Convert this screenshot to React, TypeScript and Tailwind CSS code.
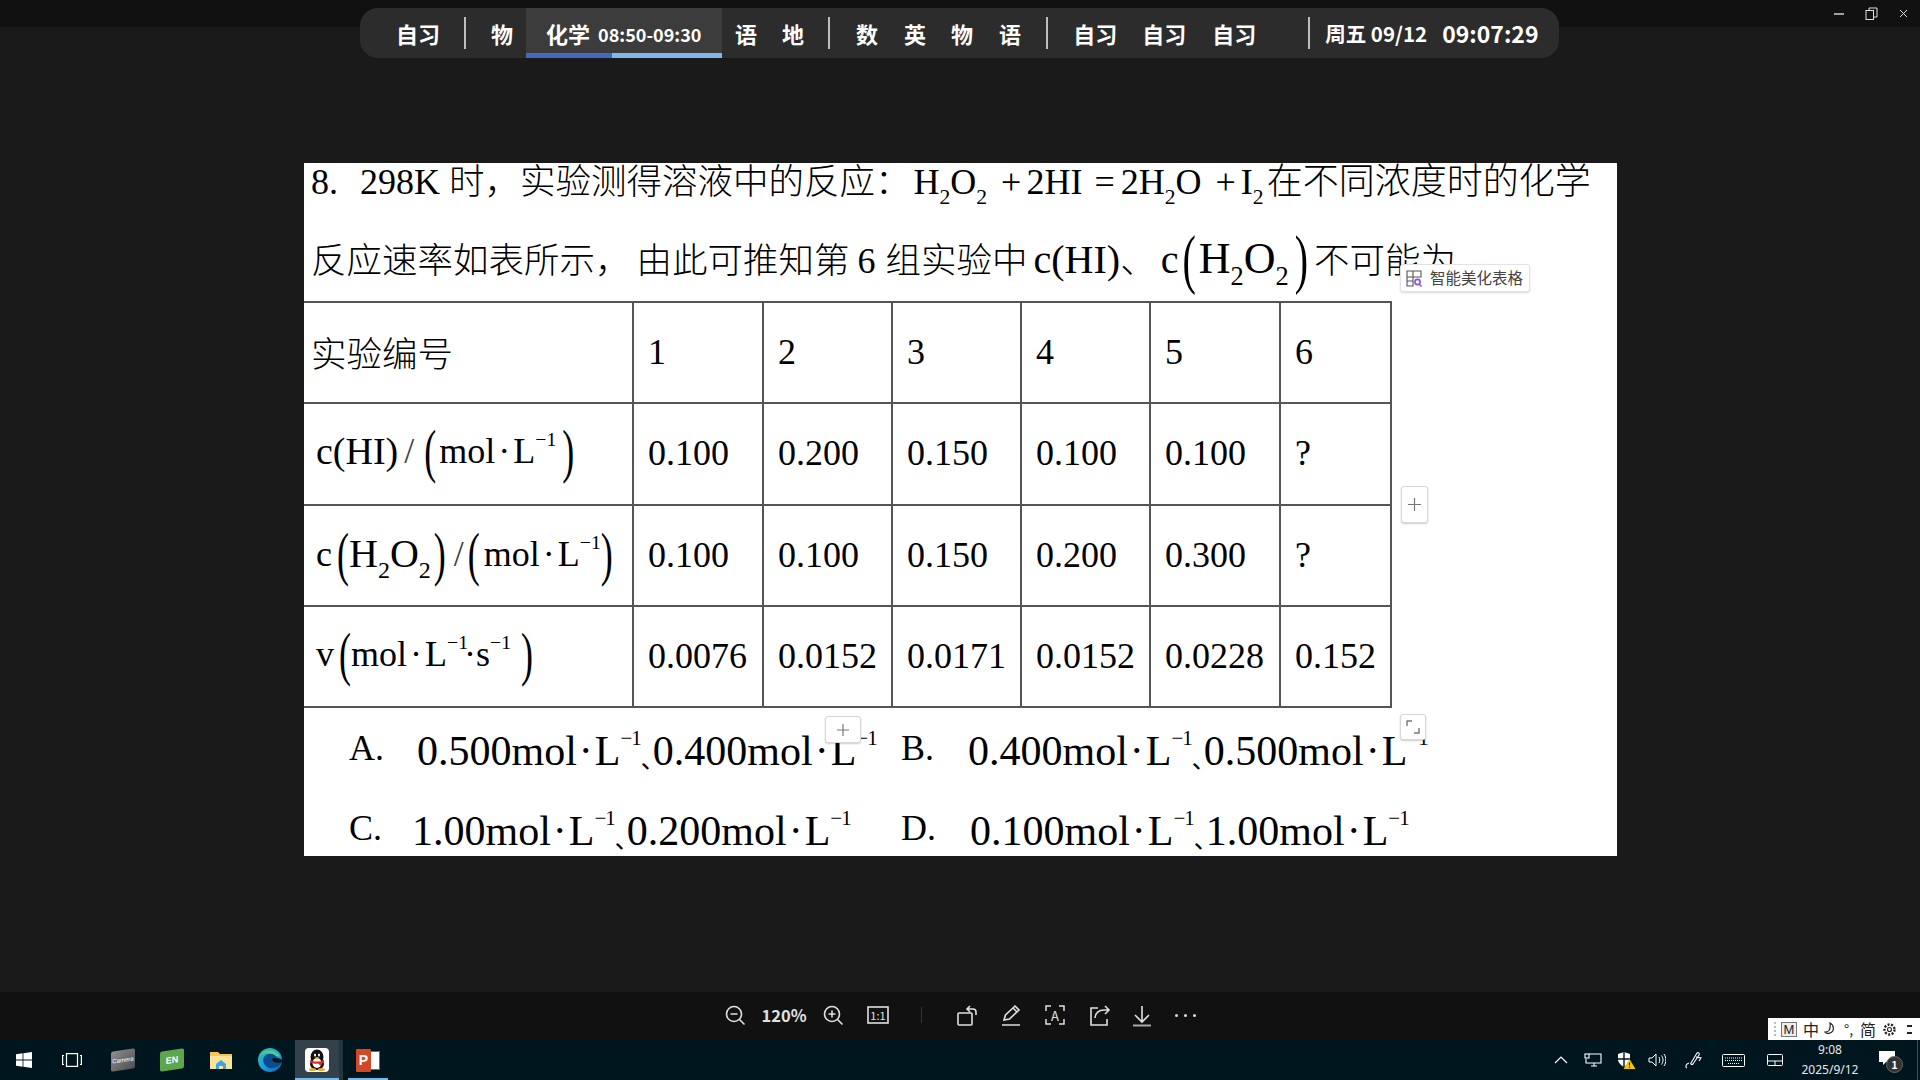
import React from "react";

const GRID = "grid grid-cols-[328px_130px_129px_129px_129px_130px_113px] border-t-2 border-[#555] ";

const Sup = ({ c = "−1" }: { c?: string }) => (
  <span className="text-[0.55em] align-[0.85em] leading-none">{c}</span>
);
const SupS = () => (
  <span className="text-[0.5em] tracking-[-1px] align-[0.95em] leading-none">−1</span>
);
const Sub = ({ c = "2" }: { c?: string }) => (
  <span className="text-[0.6em] align-[-0.45em] leading-none">{c}</span>
);
const Z = ({ children, className = "" }: { children: React.ReactNode; className?: string }) => (
  <span className={"text-[35.5px] font-light font-['Noto_Sans_CJK_SC','Liberation_Serif',sans-serif] " + className}>{children}</span>
);
const BigL = ({ className = "" }: { className?: string }) => (
  <span className={"inline-block scale-y-[1.65] font-light " + className}>(</span>
);
const BigR = ({ className = "" }: { className?: string }) => (
  <span className={"inline-block scale-y-[1.65] font-light " + className}>)</span>
);
const Val = ({ v }: { v: string }) => (
  <span className="whitespace-pre">
    {v}mol<span className="mx-[2px]">·</span>L
    <SupS />
  </span>
);
const Dun = () => (
  <span className="inline-block w-[12px] text-[24px] font-['Noto_Sans_CJK_SC',sans-serif] leading-none translate-y-[3px]">、</span>
);

const Cell = ({ children, last = false }: { children: React.ReactNode; last?: boolean }) => (
  <div className={"flex items-center pl-[14px] pb-[2px] border-l-2 border-[#555] text-[36px] " + (last ? "border-r-2" : "")}>{children}</div>
);

const Head = ({ children, className = "" }: { children: React.ReactNode; className?: string }) => (
  <div className={"flex items-center pl-[12px] text-[36px] whitespace-pre " + className}>{children}</div>
);

const rows = [
  ["0.100", "0.200", "0.150", "0.100", "0.100", "?"],
  ["0.100", "0.100", "0.150", "0.200", "0.300", "?"],
  ["0.0076", "0.0152", "0.0171", "0.0152", "0.0228", "0.152"],
];

const Ico = ({ children, w = 24, h = 24, cls = "" }: { children: React.ReactNode; w?: number; h?: number; cls?: string }) => (
  <svg width={w} height={h} viewBox={`0 0 ${w} ${h}`} fill="none" stroke="#e0e0e0" strokeWidth="1.6" className={cls}>
    {children}
  </svg>
);

const TI = ({ children }: { children: React.ReactNode }) => (
  <div className="w-[44px] flex items-center justify-center">{children}</div>
);

const Chip = ({ children, className }: { children: React.ReactNode; className: string }) => (
  <div className={"absolute bg-white border border-[#d8d8d8] rounded-[3px] shadow-[0_1px_2px_rgba(0,0,0,0.2)] flex items-center justify-center " + className}>
    {children}
  </div>
);

export default function App() {
  return (
    <div className="relative w-[1920px] h-[1080px] overflow-hidden bg-[#1a1a1a] flex flex-col font-['Noto_Sans_CJK_SC',sans-serif] text-white">
      {/* title strip */}
      <div className="h-[27px] bg-[#111111] flex items-start justify-end shrink-0">
        <div className="flex items-center h-[27px] pr-[12px] gap-[21px]">
          <div className="w-[10px] h-[2px] bg-[#a0a0a0]" />
          <svg width="13" height="13" viewBox="0 0 13 13" fill="none" stroke="#e0e0e0" strokeWidth="1">
            <rect x="1" y="3.500" width="7.500" height="9" />
            <path d="M4 3.500V1h8v9H8.500" />
          </svg>
          <svg width="9" height="9" viewBox="0 0 9 9" stroke="#e0e0e0" strokeWidth="1">
            <path d="M1 1l7 7M8 1L1 8" />
          </svg>
        </div>
      </div>

      {/* class schedule pill */}
      <div className="absolute left-[360px] top-[8px] w-[1199px] h-[50px] bg-[#2c2c2c] rounded-[18px] flex items-center overflow-hidden pl-[36px] text-[22px] font-bold leading-none whitespace-nowrap">
        <span>自习</span>
        <div className="ml-[24px] w-[2px] h-[32px] bg-[#bdbdbd]" />
        <span className="ml-[25px]">物</span>
        <div className="relative ml-[13px] w-[196px] self-stretch bg-[#3c3c3c] flex items-center pl-[20px]">
          <span>化学</span>
          <span className="ml-[8px] text-[18px] pt-[2px]">08:50-09:30</span>
          <div className="absolute left-0 right-0 bottom-0 h-[5px] flex">
            <div className="w-[86px] bg-[#4468c2]" />
            <div className="flex-1 bg-[#7fb6ee]" />
          </div>
        </div>
        <span className="ml-[13px]">语</span>
        <span className="ml-[25px]">地</span>
        <div className="ml-[24px] w-[2px] h-[32px] bg-[#bdbdbd]" />
        <span className="ml-[26px]">数</span>
        <span className="ml-[26px]">英</span>
        <span className="ml-[25px]">物</span>
        <span className="ml-[26px]">语</span>
        <div className="ml-[25px] w-[2px] h-[32px] bg-[#bdbdbd]" />
        <span className="ml-[25px]">自习</span>
        <span className="ml-[25px]">自习</span>
        <span className="ml-[26px]">自习</span>
        <div className="ml-[52px] w-[2px] h-[32px] bg-[#bdbdbd]" />
        <span className="ml-[15px] text-[20.5px]">周五 09/12</span>
        <span className="ml-[15px] text-[23px]">09:07:29</span>
      </div>

      {/* viewer area */}
      <div className="flex-1 pl-[304px] pt-[136px]">
        <div className="relative w-[1313px] h-[693px] bg-white text-black font-['Liberation_Serif','Noto_Sans_CJK_SC',serif] flex flex-col">
          {/* question */}
          <div className="-mt-[3px] h-[42px] pl-[7px] flex items-baseline text-[36px] leading-none whitespace-pre">
            <span>8.</span>
            <span className="ml-[22px]">298K</span>
            <Z className="ml-[9px]">时，实验测得溶液中的反应：</Z>
            <span className="ml-[3px]">H<Sub />O<Sub /></span>
            <span className="ml-[14px]">+</span>
            <span className="ml-[5px]">2HI</span>
            <span className="ml-[12px]">=</span>
            <span className="ml-[6px]">2H<Sub />O</span>
            <span className="ml-[14px]">+</span>
            <span className="ml-[5px]">I<Sub /></span>
            <span className="ml-[3px] text-[36px] font-light font-['Noto_Sans_CJK_SC',sans-serif]">在不同浓度时的化学</span>
          </div>
          <div className="mt-[35px] h-[42px] pl-[7px] flex items-baseline text-[40px] leading-none whitespace-pre">
            <Z>反应速率如表所示，</Z>
            <Z className="ml-[6px]">由此可推知第</Z>
            <span className="ml-[8px] text-[36px]">6</span>
            <Z className="ml-[10px]">组实验中</Z>
            <span className="ml-[6px]">c(HI)</span>
            <Z>、</Z>
            <span className="ml-[5px]">c</span>
            <BigL className="ml-[4px]" />
            <span className="ml-[3px] text-[44px]">H<Sub />O<Sub /></span>
            <BigR className="ml-[6px]" />
            <Z className="ml-[6px]">不可能为</Z>
          </div>

          {/* data table */}
          <div className="mt-[22px] w-[1088px] flex flex-col">
            <div className={GRID + "h-[101px]"}>
              <div className="flex items-center pl-[7px] pb-[2px]"><Z>实验编号</Z></div>
              {["1", "2", "3", "4", "5"].map((n) => (
                <Cell key={n}>{n}</Cell>
              ))}
              <Cell last>6</Cell>
            </div>

            <div className={GRID + "h-[102px]"}>
              <Head className="pb-[6px]">
                <span className="text-[38px]">c(HI)</span>
                <span className="ml-[6px] text-[#444]">/</span>
                <BigL className="ml-[10px]" />
                <span className="ml-[3px]">mol<span className="mx-[3px]">·</span>L<Sup /></span>
                <BigR className="ml-[6px]" />
              </Head>
              {rows[0].map((v, i) => (
                <Cell key={i} last={i === 5}>{v}</Cell>
              ))}
            </div>

            <div className={GRID + "h-[101px]"}>
              <Head className="pb-[3px]">
                <span>c</span>
                <BigL className="ml-[5px]" />
                <span className="text-[40px]">H<Sub />O<Sub /></span>
                <BigR className="ml-[3px]" />
                <span className="ml-[8px] text-[#444]">/</span>
                <BigL className="ml-[4px]" />
                <span className="ml-[4px]">mol<span className="mx-[3px]">·</span>L<Sup /></span>
                <BigR />
              </Head>
              {rows[1].map((v, i) => (
                <Cell key={i} last={i === 5}>{v}</Cell>
              ))}
            </div>

            <div className={GRID + "h-[103px] border-b-2"}>
              <Head className="pb-[6px]">
                <span>v</span>
                <BigL className="ml-[5px]" />
                <span>mol<span className="mx-[3px]">·</span>L<Sup /></span>
                <span className="-ml-[4px]">·s<Sup /></span>
                <BigR className="ml-[10px]" />
              </Head>
              {rows[2].map((v, i) => (
                <Cell key={i} last={i === 5}>{v}</Cell>
              ))}
            </div>
          </div>

          {/* answer options */}
          <div className="pl-[45px] mt-[4px] grid grid-cols-[552px_1fr] grid-rows-[80px_80px] text-[42px] leading-none whitespace-pre">
            <div className="flex items-baseline pt-[16px]">
              <span className="text-[36px] -translate-y-[5px] w-[68px]">A.</span>
              <Val v="0.500" /><Dun /><Val v="0.400" />
            </div>
            <div className="flex items-baseline pt-[16px]">
              <span className="text-[36px] -translate-y-[5px] w-[67px]">B.</span>
              <Val v="0.400" /><Dun /><Val v="0.500" />
            </div>
            <div className="flex items-baseline pt-[16px]">
              <span className="text-[36px] -translate-y-[5px] w-[63px]">C.</span>
              <Val v="1.00" /><Dun /><Val v="0.200" />
            </div>
            <div className="flex items-baseline pt-[16px]">
              <span className="text-[36px] -translate-y-[5px] w-[69px]">D.</span>
              <Val v="0.100" /><Dun /><Val v="1.00" />
            </div>
          </div>

          {/* editor overlays */}
          <div className="absolute left-[1096px] top-[101px] w-[130px] h-[28px] bg-white border border-[#e2e2e2] rounded-[3px] shadow-[0_1px_2px_rgba(0,0,0,0.15)] flex items-center pl-[4px] gap-[6px] font-['Noto_Sans_CJK_SC',sans-serif] text-[15.5px] text-[#444] whitespace-nowrap">
            <svg width="19" height="19" viewBox="0 0 19 19" fill="none" stroke="#555" strokeWidth="1.1">
              <path d="M2 2h14v6H2zM2 8v9h6V2M8 12H2" />
              <circle cx="12.500" cy="13" r="2.600" stroke="#8a4fe8" strokeWidth="1.600" />
              <path d="M14.500 15.500l2 2" stroke="#8a4fe8" strokeWidth="1.600" />
            </svg>
            <span>智能美化表格</span>
          </div>
          <Chip className="left-[1097px] top-[323px] w-[27px] h-[37px]">
            <svg width="13" height="13" viewBox="0 0 13 13" stroke="#777" strokeWidth="1.2"><path d="M6.500 0v13M0 6.500h13" /></svg>
          </Chip>
          <Chip className="left-[521px] top-[553px] w-[36px] h-[27px]">
            <svg width="12" height="12" viewBox="0 0 12 12" stroke="#777" strokeWidth="1.2"><path d="M6 0v12M0 6h12" /></svg>
          </Chip>
          <Chip className="left-[1096px] top-[551px] w-[26px] h-[26px]">
            <svg width="14" height="14" viewBox="0 0 14 14" fill="none" stroke="#777" strokeWidth="1.4"><path d="M1 6V1h5M13 8v5H8" /></svg>
          </Chip>
        </div>
      </div>

      {/* viewer toolbar */}
      <div className="h-[48px] bg-[#111111] flex items-center shrink-0 pl-[713px] pb-[2px] text-[#e0e0e0]">
        <TI><Ico><circle cx="11" cy="11" r="7.500" /><path d="M7.500 11h7M16.500 16.500l5 5" /></Ico></TI>
        <div className="w-[54px] text-center text-[16.500px] font-bold leading-none">120%</div>
        <TI><Ico><circle cx="11" cy="11" r="7.500" /><path d="M7.500 11h7M11 7.500v7M16.500 16.500l5 5" /></Ico></TI>
        <div className="w-[46px] flex items-center justify-center"><Ico w={22} h={18}><rect x="1" y="1" width="20" height="16" /><text x="11" y="13.500" textAnchor="middle" fontSize="11" fill="#e0e0e0" stroke="none">1:1</text></Ico></div>
        <div className="w-[44px] pr-[4px] flex justify-center"><div className="w-px h-[16px] bg-[#333]" /></div>
        <TI><Ico><rect x="3" y="10" width="14" height="12" rx="1" /><path d="M12 6h6a3 3 0 0 1 3 3v3M15 3l-3 3 3 3" /></Ico></TI>
        <TI><Ico><path d="M5 17l1.500-5L16 3l4 4-9.500 9zM14 5l4 4" /><path d="M3 22h18" strokeWidth="2" stroke="#aaaaaa" /></Ico></TI>
        <TI>
          <div className="relative w-[20px] h-[20px] flex items-center justify-center text-[13px] leading-none">
            A
            <svg className="absolute inset-0" width="20" height="20" fill="none" stroke="#e0e0e0" strokeWidth="1.500"><path d="M1 6V1h5M14 1h5v5M19 14v5h-5M6 19H1v-5" /></svg>
          </div>
        </TI>
        <div className="w-[43px] flex items-center justify-center"><Ico><path d="M11 5H4v17h16v-6" /><path d="M8 15c0-5 4-8 9-8h4M18 3l4 4-4 4" /></Ico></div>
        <TI><Ico><path d="M12 3v15M5 12l7 7 7-7" /><path d="M3 22.500h18" strokeWidth="2" stroke="#aaaaaa" /></Ico></TI>
        <div className="w-[42px] flex items-center justify-center"><div className="flex gap-[6px]"><i className="w-[3px] h-[3px] rounded-full bg-[#ddd]" /><i className="w-[3px] h-[3px] rounded-full bg-[#ddd]" /><i className="w-[3px] h-[3px] rounded-full bg-[#ddd]" /></div></div>
      </div>

      {/* taskbar */}
      <div className="relative h-[40px] bg-[#00161f] shrink-0 flex items-center text-white">
        <svg width="16" height="16" viewBox="0 0 16 16" fill="white" className="ml-[16px]">
          <path d="M0 2.300L6.600 1.300V7.600H0zM7.400 1.200L16 0V7.600H7.400zM0 8.400H6.600V14.700L0 13.700zM7.400 8.400H16V16L7.400 14.800z" />
        </svg>
        <svg width="20" height="14" viewBox="0 0 20 14" fill="none" stroke="white" strokeWidth="1.200" className="ml-[30px]">
          <rect x="4.500" y="0.600" width="11" height="12.800" />
          <path d="M2 2.500H.6v9H2M18 2.500h1.400v9H18" />
        </svg>
        <div className="ml-[29px] w-[24px] h-[20px] rounded-[2px] -skew-y-[8deg] bg-gradient-to-br from-[#8f8f8f] to-[#4f4f4f] flex items-center justify-center text-[6px] leading-none font-['Liberation_Sans',sans-serif]">Camera</div>
        <div className="ml-[25px] w-[24px] h-[20px] rounded-[2px] -skew-y-[8deg] bg-[#5ea64e] flex items-center justify-center text-[9px] font-bold leading-none font-['Liberation_Sans',sans-serif]">EN</div>
        <svg width="22" height="18" viewBox="0 0 22 18" className="ml-[26px]">
          <path d="M0 1h8l2 2h12v15H0z" fill="#f4c653" />
          <path d="M0 5h22v13H0z" fill="#fbe39a" />
          <path d="M6 18v-5l5-4 5 4v5h-3v-3H9v3z" fill="#3aa7e8" />
        </svg>
        <svg width="24" height="24" viewBox="0 0 24 24" className="ml-[26px]">
          <defs>
            <linearGradient id="edgeA" x1="0" y1="0" x2="1" y2="1">
              <stop offset="0" stopColor="#2ec4a8" />
              <stop offset="0.5" stopColor="#1c9fe0" />
              <stop offset="1" stopColor="#0c5fb0" />
            </linearGradient>
          </defs>
          <circle cx="12" cy="12" r="12" fill="url(#edgeA)" />
          <path d="M24 14c-3 2-9 1-10-2 0-2 2-3 5-2-2-5-10-6-13-1-2 4 0 9 5 11 5 1 10-1 13-6z" fill="#0d4a8e" />
          <path d="M14 12c1 3 7 4 10 2v-2c-1-1-3-2-5-2-3-1-5 0-5 2z" fill="#00161f" />
          <path d="M2 8C6 0 19 0 23 10c-2-2-3-2-5-2-4-3-10-4-16 0z" fill="#53c985" />
        </svg>
        <div className="relative ml-[13px] w-[44px] h-[40px] bg-[#33414b] flex items-center justify-center">
          <div className="w-[24px] h-[24px] rounded-[4px] bg-white flex items-center justify-center">
            <svg width="20" height="22" viewBox="0 0 20 22">
              <ellipse cx="10" cy="8" rx="6.500" ry="7.500" fill="#111" />
              <ellipse cx="10" cy="15" rx="7" ry="6" fill="#111" />
              <ellipse cx="10" cy="14" rx="4.500" ry="5" fill="#fff" />
              <ellipse cx="8" cy="6" rx="1" ry="1.500" fill="#fff" />
              <ellipse cx="12" cy="6" rx="1" ry="1.500" fill="#fff" />
              <path d="M3 11c4 2 10 2 14 0v2c-1 1-2 1-3 1v3l-3-2.500c-3 .5-6 0-8-1z" fill="#e1252a" />
              <ellipse cx="5.500" cy="20.500" rx="3.500" ry="1.500" fill="#f5a623" />
              <ellipse cx="14.500" cy="20.500" rx="3.500" ry="1.500" fill="#f5a623" />
              <ellipse cx="10" cy="9" rx="2" ry="1" fill="#f5a623" />
            </svg>
          </div>
          <div className="absolute left-0 right-0 bottom-0 h-[2px] bg-[#76b9ed]" />
        </div>
        <div className="w-[4px] h-[40px] bg-[#26343d]" />
        <div className="relative ml-[5px] w-[40px] h-[40px] flex items-center justify-center">
          <div className="relative w-[24px] h-[23px]">
            <div className="absolute right-0 top-[2px] w-[16px] h-[19px] bg-white border border-[#d24726]" />
            <div className="absolute left-0 top-0 w-[15px] h-[23px] bg-[#d24726] rounded-[1px] flex items-center justify-center text-[14px] font-bold leading-none font-['Liberation_Sans',sans-serif]">P</div>
          </div>
          <div className="absolute left-0 right-0 bottom-0 h-[2px] bg-[#76b9ed]" />
        </div>

        <div className="ml-auto flex items-center">
          <svg width="14" height="8" viewBox="0 0 14 8" fill="none" stroke="white" strokeWidth="1.200" className="mr-[16px]"><path d="M1 7l6-6 6 6" /></svg>
          <svg width="18" height="14" viewBox="0 0 18 14" fill="none" stroke="white" strokeWidth="1.100" className="mr-[15px]">
            <path d="M5 1h12v9H2V6M7 13h6M10 10v3" /><rect x="1" y="1" width="4" height="4" />
          </svg>
          <svg width="19" height="18" viewBox="0 0 19 18" className="mr-[12px]">
            <path d="M7 1L1 3v5c0 4 3 6 6 8 3-2 6-4 6-8V3z" fill="white" />
            <path d="M7 1v15M1 8h12" stroke="#00161f" strokeWidth="1.400" />
            <path d="M12.500 8l6 10h-12z" fill="#f7c600" />
            <path d="M12.500 11.500v3M12.500 15.500v1.200" stroke="#222" strokeWidth="1.200" />
          </svg>
          <svg width="18" height="14" viewBox="0 0 18 14" fill="none" stroke="white" strokeWidth="1" className="mr-[19px]">
            <path d="M1 5h3l4-4v12l-4-4H1zM11 4c1 2 1 4 0 6M13.500 2.500c2 3 2 6 0 9M16 1c2.500 4 2.500 8 0 12" />
          </svg>
          <svg width="18" height="18" viewBox="0 0 18 18" fill="none" stroke="white" strokeWidth="1.100" className="mr-[19px]">
            <path d="M6 12l6-10c1-1 3 0 2 2l-6 9c-1 1-3 0-2-1zM11 6l5 1-2 3M4 12c-3 1-4 4-2 5" />
          </svg>
          <svg width="23" height="13" viewBox="0 0 23 13" fill="none" stroke="white" strokeWidth="1" className="mr-[22px]">
            <rect x="0.500" y="0.500" width="22" height="12" rx="1" />
            <path d="M3 4h17M3 6.500h17M6 9.500h11" strokeDasharray="1 1" />
          </svg>
          <svg width="16" height="12" viewBox="0 0 16 12" fill="none" stroke="white" strokeWidth="1" className="mr-[14px]">
            <rect x="0.500" y="0.500" width="15" height="11" rx="1" /><path d="M0.500 7h15M8 7v4.500" />
          </svg>
          <div className="w-[66px] text-center text-[12px] leading-[20px] font-['Noto_Sans','Noto_Sans_CJK_SC',sans-serif] text-[#e8e8e8]">
            <div>9:08</div>
            <div>2025/9/12</div>
          </div>
          <div className="relative ml-[16px] mr-[25px] w-[16px] h-[18px]">
            <svg width="16" height="15" viewBox="0 0 16 15" fill="white"><path d="M0 0h16v11H7l-3 3v-3H0z" /></svg>
            <div className="absolute left-[7px] top-[5px] w-[17px] h-[17px] rounded-full bg-[#333] border border-[#666] text-[11px] font-bold leading-[15px] text-center">1</div>
          </div>
        </div>
        <div className="absolute right-[2px] top-0 h-full w-px bg-[#36505c]" />
      </div>

      {/* input method bar */}
      <div className="absolute left-[1768px] top-[1018px] w-[152px] h-[22px] bg-white text-[#222] flex items-center text-[16px] leading-none pl-[6px] font-['Noto_Sans_CJK_SC',sans-serif]">
        <div className="w-[2px] h-[14px] border-l-2 border-dotted border-[#bbb]" />
        <div className="ml-[5px] w-[16px] h-[15px] border border-[#777] bg-[#eee] flex items-center justify-center text-[13px] font-['Liberation_Sans',sans-serif]">M</div>
        <span className="ml-[6px]">中</span>
        <svg width="14" height="14" viewBox="0 0 14 14" fill="none" stroke="#222" strokeWidth="1.200" className="ml-[5px]"><path d="M6 1c4 2 5 8 0 10-2 1-4 0-5-1 3 0 6-1 5-9z" /></svg>
        <span className="ml-[6px] text-[14px]">°,</span>
        <span className="ml-[7px]">简</span>
        <svg width="15" height="15" viewBox="0 0 15 15" fill="none" stroke="#222" strokeWidth="1.100" className="ml-[6px]"><circle cx="7.500" cy="7.500" r="2" /><circle cx="7.500" cy="7.500" r="5" strokeDasharray="2 1.500" strokeWidth="2.400" /></svg>
        <div className="ml-[10px] w-[5px] flex flex-col gap-[5px]"><i className="h-[2px] bg-[#222]" /><i className="h-[2px] bg-[#222]" /></div>
      </div>
    </div>
  );
}
